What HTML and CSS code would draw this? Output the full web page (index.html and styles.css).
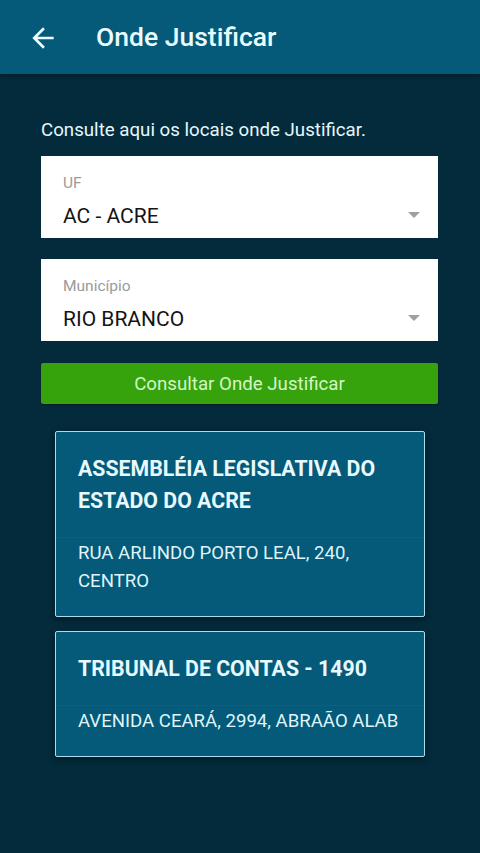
FILE: index.html
```html
<!DOCTYPE html>
<html>

<head>
    <meta charset=utf-8>
    <meta name="viewport" content="width=device-width, initial-scale=1">
    <title>Onde Justificar</title>
    <link rel="stylesheet" href="styles.css">
</head>

<body>
    <header class="appbar">
        <svg class="back" width="32" height="32" viewBox="0 0 24 24">
            <path d="M20 11H7.83l5.59-5.59L12 4l-8 8 8 8 1.41-1.41L7.83 13H20v-2z" fill="currentColor" />
        </svg>
        <h1>Onde Justificar</h1>
    </header>

    <main class="content">
        <p class="intro">Consulte aqui os locais onde Justificar.</p>

        <div class="select">
            <span class="select-label">UF</span>
            <span class="select-value">AC - ACRE</span>
            <span class="caret"></span>
        </div>

        <div class="select">
            <span class="select-label">Município</span>
            <span class="select-value">RIO BRANCO</span>
            <span class="caret"></span>
        </div>

        <button class="submit">Consultar Onde Justificar</button>

        <div class="results">
            <div class="card">
                <div class="card-title">ASSEMBLÉIA LEGISLATIVA DO ESTADO DO ACRE</div>
                <div class="card-address">RUA ARLINDO PORTO LEAL, 240, CENTRO</div>
            </div>
            <div class="card">
                <div class="card-title">TRIBUNAL DE CONTAS - 1490</div>
                <div class="card-address">AVENIDA CEARÁ, 2994, ABRAÃO ALAB</div>
            </div>
        </div>
    </main>
</body>

</html>
```

FILE: styles.css
```css
/* Page base: dark teal background, Roboto everywhere */
body {
    margin: 0;
    background-color: #042b3b;
    font-family: Roboto, "Liberation Sans", sans-serif;
    color: #e4f8ff;
    min-height: 853px;
}

/* Top bar with back arrow and title */
.appbar {
    height: 74px;
    background-color: #045a78;
    display: flex;
    align-items: center;
    padding: 0 0 0 27px;
    box-shadow: 0 2px 4px rgba(0, 0, 0, 0.35);
}

.back {
    color: #eafcff;
    margin-right: 37px;
    margin-top: 1px;
}

.appbar h1 {
    margin: 0;
    font-size: 26.5px;
    font-weight: 500;
    color: #eafcff;
    margin-top: -1px;
}

/* Main column */
.content {
    padding: 0 42px 0 41px;
}

.intro {
    margin: 0;
    padding-top: 44px;
    font-size: 18.7px;
    line-height: 24px;
    color: #e4f8ff;
}

/* White dropdown boxes */
.select {
    position: relative;
    background-color: #fff;
    height: 82px;
    box-sizing: border-box;
    padding: 17px 22px 0 22px;
    display: flex;
    flex-direction: column;
    margin-top: 14px;
}

.select+.select {
    margin-top: 21px;
}

.select-label {
    font-size: 15.5px;
    line-height: 20px;
    color: #9b9b9b;
}

.select-value {
    font-size: 21px;
    line-height: 28px;
    color: #141414;
    margin-top: 9px;
}

/* Small grey triangle on the right of a dropdown */
.caret {
    position: absolute;
    right: 18px;
    top: 56px;
    width: 0;
    height: 0;
    border-left: 6px solid transparent;
    border-right: 6px solid transparent;
    border-top: 6px solid #a0a0a0;
}

/* Green search button */
.submit {
    display: block;
    width: 100%;
    height: 41px;
    margin-top: 22px;
    border: none;
    border-radius: 2px;
    background-color: #36a20c;
    color: #d2f7c6;
    font-family: inherit;
    font-size: 18.7px;
    box-shadow: 0 1px 2px rgba(0, 0, 0, 0.4);
}

/* Result cards */
.results {
    padding: 27px 13px 0 14px;
    display: flex;
    flex-direction: column;
    gap: 14px;
}

.card {
    background-color: #045a78;
    border: 1.5px solid #a9dcef;
    border-radius: 2px;
    box-shadow: 0 2px 6px rgba(0, 0, 0, 0.45);
}

.card-title {
    padding: 21px 22px 20px 22px;
    font-size: 21.3px;
    line-height: 32px;
    font-weight: 700;
    color: #e6f9ff;
    border-bottom: 1px solid rgba(255, 255, 255, 0.04);
}

.card-address {
    padding: 0 22px 21px 22px;
    font-size: 18.6px;
    line-height: 28px;
    color: #dff4fb;
    margin-top: 1px;
}
```
